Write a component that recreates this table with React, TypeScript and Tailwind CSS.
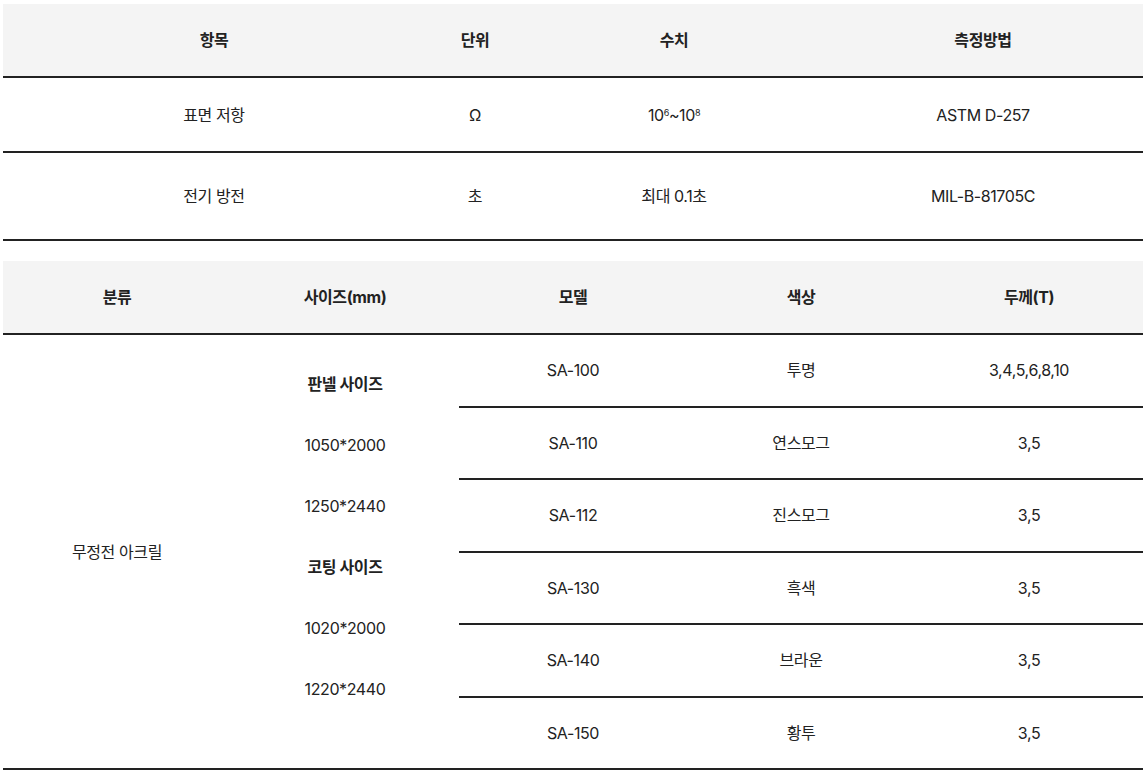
import React from 'react';

const font = { fontFamily: 'Inter, "Noto Sans CJK KR", "Noto Sans", sans-serif' };

const specRows = [
  { item: '표면 저항', unit: 'Ω', value: <>10<sup className="text-[9px]">6</sup>~10<sup className="text-[9px]">8</sup></>, method: 'ASTM D-257', h: 'h-[75px]' },
  { item: '전기 방전', unit: '초', value: <>최대 0.1초</>, method: 'MIL-B-81705C', h: 'h-[88px]' },
];

const models = [
  { model: 'SA-100', color: '투명', t: '3,4,5,6,8,10' },
  { model: 'SA-110', color: '연스모그', t: '3,5' },
  { model: 'SA-112', color: '진스모그', t: '3,5' },
  { model: 'SA-130', color: '흑색', t: '3,5' },
  { model: 'SA-140', color: '브라운', t: '3,5' },
  { model: 'SA-150', color: '황투', t: '3,5' },
];

const sizes = [
  { text: '판넬 사이즈', bold: true },
  { text: '1050*2000' },
  { text: '1250*2440' },
  { text: '코팅 사이즈', bold: true },
  { text: '1020*2000' },
  { text: '1220*2440' },
];

export default function App() {
  return (
    <div className="min-h-screen bg-white px-[3px] pt-[4px] text-[16px] tracking-[-0.025em] text-[#222]" style={font}>
      {/* 물성표 */}
      <table className="w-[1140px] table-fixed border-collapse text-center">
        <colgroup>
          <col className="w-[422px]" />
          <col className="w-[100px]" />
          <col className="w-[298px]" />
          <col className="w-[320px]" />
        </colgroup>
        <thead>
          <tr className="h-[73px] border-b-2 border-[#222] bg-[#f4f4f4] font-bold">
            <th>항목</th>
            <th>단위</th>
            <th>수치</th>
            <th>측정방법</th>
          </tr>
        </thead>
        <tbody>
          {specRows.map((r) => (
            <tr key={r.item} className={`${r.h} border-b-2 border-[#222]`}>
              <td>{r.item}</td>
              <td>{r.unit}</td>
              <td>{r.value}</td>
              <td>{r.method}</td>
            </tr>
          ))}
        </tbody>
      </table>

      {/* 제품 규격 */}
      <table className="mt-[20px] w-[1140px] table-fixed border-collapse text-center">
        <thead>
          <tr className="h-[73px] border-b-2 border-[#222] bg-[#f4f4f4] font-bold">
            <th>분류</th>
            <th>사이즈(mm)</th>
            <th>모델</th>
            <th>색상</th>
            <th>두께(T)</th>
          </tr>
        </thead>
        <tbody>
          {models.map((m, i) => (
            <tr key={m.model} className="h-[72.5px]">
              {i === 0 && (
                <>
                  <td rowSpan={6} className="border-b-2 border-[#222] align-middle">
                    무정전 아크릴
                  </td>
                  <td rowSpan={6} className="border-b-2 border-[#222] pb-[30px] align-middle">
                    <div className="flex flex-col gap-[31px]">
                      {sizes.map((s) => (
                        <p key={s.text} className={`leading-[30px] ${s.bold ? 'font-bold' : ''}`}>
                          {s.text}
                        </p>
                      ))}
                    </div>
                  </td>
                </>
              )}
              <td className="border-b-2 border-[#222]">{m.model}</td>
              <td className="border-b-2 border-[#222]">{m.color}</td>
              <td className="border-b-2 border-[#222]">{m.t}</td>
            </tr>
          ))}
        </tbody>
      </table>
    </div>
  );
}
